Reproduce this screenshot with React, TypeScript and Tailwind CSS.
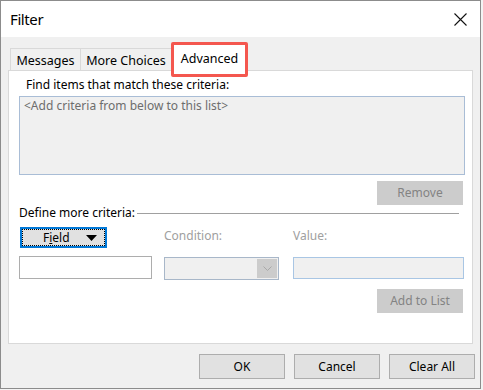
import React from 'react';

const font = { fontFamily: '"Noto Sans", "Open Sans", sans-serif' };

function DisabledButton({ label }: { label: string }) {
  return (
    <div className="mr-[2px] flex h-[24px] w-[86px] items-center justify-center self-end bg-[#cccccc] text-[12px] text-[#838383]">
      {label}
    </div>
  );
}

function DialogButton({ label }: { label: string }) {
  return (
    <div className="flex h-[25px] w-[86px] items-center justify-center border border-[#adadad] bg-[#e1e1e1] text-[12px] text-black">
      {label}
    </div>
  );
}

export default function App() {
  return (
    <div className="h-[390px] w-[483px] bg-[#f3f3f3]" style={font}>
      <div className="flex h-[389px] w-[481px] flex-col border border-[#8c8c8c] bg-[#f0f0f0]">
        {/* title bar */}
        <div className="flex h-[36px] items-center justify-between bg-white pl-[9px] pr-[12px]">
          <span className="text-[15px] leading-[20px] tracking-[-0.4px] text-black">Filter</span>
          <svg width="13" height="13" viewBox="0 0 13 13" className="mr-[1px]">
            <path d="M0.5 0.5 L12.5 12.5 M12.5 0.5 L0.5 12.5" stroke="#111" strokeWidth="1.1" />
          </svg>
        </div>

        {/* tabs */}
        <div className="relative ml-[9px] mt-[7px] flex h-[26px] items-end text-[12.5px] leading-[17px] text-black">
          <div className="flex h-[22px] w-[71px] items-start justify-center border border-b-0 border-[#d9d9d9] bg-[#f0f0f0] pt-[3px]">
            Messages
          </div>
          <div className="flex h-[22px] w-[91px] items-start justify-center border border-b-0 border-l-0 border-[#d9d9d9] bg-[#f0f0f0] pt-[3px]">
            More Choices
          </div>
          <div className="relative z-10 -mb-px flex h-[27px] w-[75px] items-start justify-center border border-b-0 border-[#d9d9d9] bg-white pt-[5px]">
            Advanced
          </div>
          <div className="pointer-events-none absolute left-[161px] top-[-2px] z-20 h-[35px] w-[77px] rounded-[2px] border-[3px] border-[#f4574f]" />
        </div>

        {/* panel */}
        <div className="mx-[7px] flex h-[274px] flex-col border border-[#d9d9d9] bg-white pl-[10px]">
          <div className="ml-[7px] mt-[6px] text-[12px] leading-[16px] text-black">
            Find items that match these criteria:
          </div>
          <div className="mt-[3px] h-[79px] w-[446px] border border-[#a9bdd6] bg-[#f0f0f0] px-[4px] pt-[1px] text-[12px] leading-[16px] text-[#6d6d6d]">
            &lt;Add criteria from below to this list&gt;
          </div>
          <div className="mt-[6px] flex w-[446px] flex-col">
            <DisabledButton label="Remove" />
          </div>

          <div className="flex w-[440px] items-center">
            <span className="text-[12px] leading-[16px] text-black">Define more criteria:</span>
            <div className="ml-[2px] h-px flex-1 bg-[#a0a0a0]" />
          </div>

          <div className="mt-[6px] grid grid-cols-[133px_115px_171px] gap-y-[8px]">
            <div className="ml-px flex h-[21px] w-[87px] border-2 border-[#0078d7] bg-[#e1e1e1]">
              <div className="flex flex-1 items-center border border-dotted border-black pl-[20px] pr-[7px] text-[12px] text-black">
                <span>
                  F<span className="underline">i</span>eld
                </span>
                <svg width="11" height="6" viewBox="0 0 11 6" className="ml-auto">
                  <path d="M0 0 H11 L5.5 6 Z" fill="#000" />
                </svg>
              </div>
            </div>
            <div className="mb-[4px] ml-[12px] self-end text-[12px] leading-[16px] text-[#a0a0a0]">Condition:</div>
            <div className="mb-[4px] ml-[26px] self-end text-[12px] leading-[16px] text-[#a0a0a0]">Value:</div>

            <div className="h-[23px] w-[133px] border border-[#adadad] bg-white" />
            <div className="ml-[12px] mt-px flex h-[23px] w-[115px] border border-[#a8b7c9] bg-[#f0f0f0]">
              <div className="flex-1" />
              <div className="m-px flex w-[20px] items-center justify-center bg-[#cccccc]">
                <svg width="9" height="5" viewBox="0 0 9 5">
                  <path d="M0.5 0.5 L4.5 4.5 L8.5 0.5" stroke="#a8a8a8" fill="none" strokeWidth="1" />
                </svg>
              </div>
            </div>
            <div className="ml-[26px] mt-px h-[22px] w-[171px] border border-[#a9c6e4] bg-[#f0f0f0]" />
          </div>

          <div className="mt-[9px] flex w-[446px] flex-col">
            <DisabledButton label="Add to List" />
          </div>
        </div>

        {/* footer */}
        <div className="mr-[5px] mt-[10px] flex justify-end gap-[9px]">
          <DialogButton label="OK" />
          <DialogButton label="Cancel" />
          <DialogButton label="Clear All" />
        </div>
      </div>
    </div>
  );
}
